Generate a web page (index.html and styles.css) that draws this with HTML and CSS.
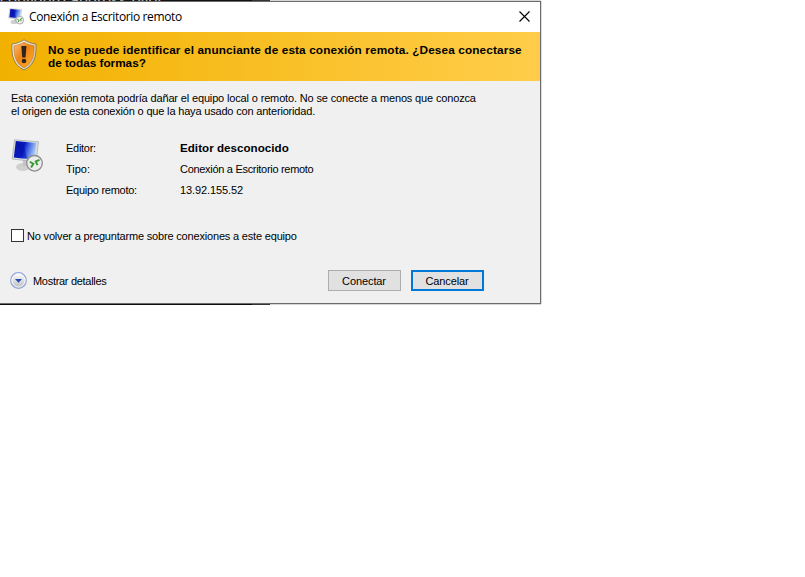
FILE: index.html
```html
<!DOCTYPE html>
<html lang="es">
<head>
<meta charset="utf-8">
<title>Conexión a Escritorio remoto</title>
<link rel="stylesheet" href="styles.css">
</head>
<body>
<svg class="defs" width="0" height="0" aria-hidden="true">
  <defs>
    <linearGradient id="screen" x1="0" y1="0" x2="1" y2=".25">
      <stop offset="0" stop-color="#0714a0"/><stop offset=".5" stop-color="#0c1cc8"/>
      <stop offset=".62" stop-color="#2c50dc"/><stop offset="1" stop-color="#a8c8f4"/>
    </linearGradient>
    <linearGradient id="metal" x1="0" y1="0" x2="0" y2="1">
      <stop offset="0" stop-color="#fff"/><stop offset="1" stop-color="#bcbcbc"/>
    </linearGradient>
    <linearGradient id="shieldFill" x1="0" y1="0" x2="1" y2="1">
      <stop offset="0" stop-color="#f9c07c"/><stop offset=".45" stop-color="#ee8414"/><stop offset="1" stop-color="#ffb52c"/>
    </linearGradient>
    <linearGradient id="shieldRim" x1="0" y1="0" x2="1" y2="1">
      <stop offset="0" stop-color="#fffdf2"/><stop offset="1" stop-color="#c9c5b5"/>
    </linearGradient>
    <symbol id="remote" viewBox="0 0 32 34">
      <ellipse cx="12" cy="28" rx="7" ry="4" fill="#d0d0d0"/>
      <path d="M12 21h8v6h-8z" fill="#c4c4c4"/>
      <path d="M3.500 .8l24 2-2.500 20L1.200 20z" fill="#dde0e2" stroke="#a4a8ac" stroke-width=".7"/>
      <path d="M4.800 2l20.700 2-2.200 17L2.800 18.500z" fill="url(#screen)"/>
      <path d="M5 3l7 .6 4 15.500-5-.6z" fill="#0410a0" opacity=".5"/>
      <circle cx="23.500" cy="24.300" r="7.800" fill="#ececec" stroke="#8c8c8c" stroke-width="1.300"/>
      <path d="M18.800 22.800l3.500 2-2.200 3.600M28.500 20.800l-3.800 1.700 1.800 3.700" fill="none" stroke="#32982f" stroke-width="1.900"/>
    </symbol>
  </defs>
</svg>
<div class="backdrop-top">configure address over</div>
<main class="dialog">
  <header class="titlebar">
    <svg class="app-icon"><use href="#remote"/></svg>
    <h1><span class="t-title">Conexión a Escritorio remoto</span></h1>
    <svg class="close" viewBox="0 0 11 11"><path d="M.5.5l10 10M10.500.5l-10 10" fill="none" stroke="#000" stroke-width="1.100"/></svg>
  </header>
  <section class="warning">
    <svg class="shield" viewBox="0 0 26 32">
      <path d="M13 .8C9.500 3 5.500 4.600 1 5c-.6 13 2 21 12 26 10-5 12.600-13 12-26C20.500 4.600 16.500 3 13 .8z" fill="url(#shieldRim)" stroke="#7c6840" stroke-width=".8"/>
      <path d="M13 3.200C10 4.900 6.600 6.200 2.900 6.700c-.2 11.300 2.400 17.800 10.100 22.100 7.700-4.300 10.300-10.800 10.100-22.100C19.400 6.200 16 4.900 13 3.200z" fill="url(#shieldFill)" stroke="#c07018" stroke-width=".6"/>
      <path d="M10.300 7h5.200l-1 11.500h-3.200z" fill="#2b251f"/><circle cx="13" cy="22" r="2.300" fill="#2b251f"/>
    </svg>
    <p><span class="t-warn1">No se puede identificar el anunciante de esta conexión remota. ¿Desea conectarse</span><br><span class="t-warn2">de todas formas?</span></p>
  </section>
  <section class="content">
    <p class="intro"><span class="t-intro1">Esta conexión remota podría dañar el equipo local o remoto. No se conecte a menos que conozca</span><br><span class="t-intro2">el origen de esta conexión o que la haya usado con anterioridad.</span></p>
    <div class="info">
      <svg class="remote-icon"><use href="#remote"/></svg>
      <dl>
        <dt><span class="t-editor">Editor:</span></dt><dd class="publisher"><b class="t-unknown">Editor desconocido</b></dd>
        <dt><span class="t-type">Tipo:</span></dt><dd><span class="t-conn">Conexión a Escritorio remoto</span></dd>
        <dt><span class="t-host">Equipo remoto:</span></dt><dd><span class="t-ip">13.92.155.52</span></dd>
      </dl>
    </div>
    <div class="option"><span class="checkbox"></span><span class="t-option">No volver a preguntarme sobre conexiones a este equipo</span></div>
    <footer>
      <svg class="expander" viewBox="0 0 17 17"><circle cx="8.500" cy="8.500" r="7.800" fill="url(#metal)" stroke="#92a5db" stroke-width="1.200"/><circle cx="8.500" cy="8.500" r="6.600" fill="none" stroke="#fff" stroke-width=".8"/><path d="M5 7h7L8.500 10.800z" fill="#2448b4"/></svg>
      <span class="details"><span class="t-details">Mostrar detalles</span></span>
      <button type="button"><span class="t-connect">Conectar</span></button>
      <button type="button" class="default"><span class="t-cancel">Cancelar</span></button>
    </footer>
  </section>
</main>
<div class="backdrop-bottom"></div>
</body>
</html>
```
FILE: styles.css
```css
* { box-sizing: border-box; }
body { margin: 0; background: #fff; color: #000; font: 11px/13px "Liberation Sans", Arial, sans-serif; }
h1, p, dl, dd { margin: 0; }
svg { display: block; flex: none; }
span, b { white-space: nowrap; }
.defs { position: absolute; }
.backdrop-top { width: 541px; height: 1px; overflow: hidden; color: #bbb; font-size: 16px; line-height: 1px; background: linear-gradient(90deg, #111 252px, #333 252px 270px, #d6d6d6 270px); }
.dialog { width: 541px; height: 303px; background: #f0f0f0; border: solid #6b6b6b; border-width: 1px 1px 1px 0; box-shadow: 1px 0 0 #ddd; }
.titlebar { height: 30px; display: flex; align-items: center; padding: 0 10px 0 8px; background: #fff; }
.app-icon { width: 16px; height: 17px; margin-top: -2px; }
h1 { flex: 1; margin-left: 5px; font: 12px/16px "Open Sans", sans-serif; }
.close { width: 11px; height: 11px; margin-top: -1px; }
.warning { height: 49px; display: flex; padding: 7px 0 0 11px; background: linear-gradient(90deg, #f2b100, #ffcd4a); font-weight: bold; }
.shield { width: 26px; height: 32px; }
.warning p { margin: 5px 0 0 11px; font-size: 11.8px; }
.content { padding: 11px 0 0 11px; }
.info { display: flex; margin-top: 20px; }
.remote-icon { width: 32px; height: 34px; margin-top: 1px; }
dl { display: grid; grid-template-columns: 114px auto; grid-auto-rows: 21px; margin-left: 23px; line-height: 21px; }
.publisher { font-size: 11.6px; line-height: 19px; }
.option { display: flex; align-items: center; height: 13px; margin-top: 28px; }
.checkbox { width: 13px; height: 13px; margin-right: 3px; border: 1px solid #333; background: #fff; }
.t-option { padding-top: 1px; }
footer { display: flex; align-items: center; height: 21px; margin: 28px 0 0 -1px; }
.expander { width: 17px; height: 17px; }
.details { width: 295px; margin-left: 6px; padding-top: 1px; }
button { width: 73px; height: 21px; padding: 1px 1px 0 0; margin: 0 10px 0 0; border: 1px solid #adadad; background: #e1e1e1; color: #000; font: inherit; }
button.default { border: 2px solid #0078d7; }
.t-title { letter-spacing: -.36px; }
.t-warn1 { letter-spacing: .12px; }
.t-warn2 { letter-spacing: -.03px; }
.t-intro1 { letter-spacing: -.15px; }
.t-intro2, .t-option { letter-spacing: -.18px; }
.t-editor, .t-host { letter-spacing: -.27px; }
.t-conn, .t-details { letter-spacing: -.3px; }
.t-unknown { letter-spacing: .03px; }
.t-ip, .t-connect, .t-cancel { letter-spacing: -.1px; }
.backdrop-bottom { width: 541px; height: 1px; background: linear-gradient(90deg, #0c0c10 252px, #333 252px 270px, #d4d4d4 270px); }
```
